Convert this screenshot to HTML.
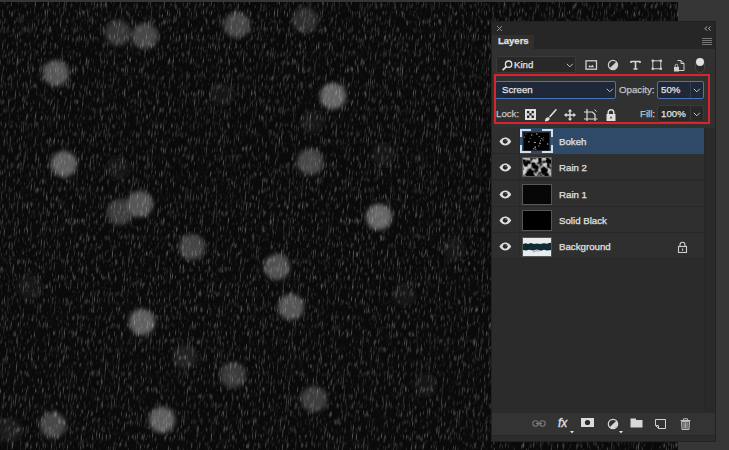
<!DOCTYPE html>
<html><head><meta charset="utf-8">
<style>
*{box-sizing:border-box;margin:0;padding:0}
html,body{width:729px;height:450px;overflow:hidden;background:#363636;font-family:"Liberation Sans",sans-serif;}
.a{position:absolute}
#canvas{position:absolute;left:0;top:2px;width:678px;height:448px;background:#080808;overflow:hidden}
#panel{position:absolute;left:491px;top:21px;width:225px;height:421px;background:#313131;border:1px solid #222}
.t{position:absolute;color:#e2e2e2;font-size:9.7px;white-space:nowrap;line-height:10px;-webkit-text-stroke:0.25px currentColor}
.row{position:absolute;left:0;width:212px;height:26px;border-bottom:1px solid #272727;background:#2f2f2f}
.eye{position:absolute;left:7px;top:9px}
</style></head><body>
<div id="canvas">
<svg width="678" height="448" style="position:absolute;left:0;top:0">
<defs>
<filter id="rain" x="-20" y="0" width="760" height="448" filterUnits="userSpaceOnUse">
<feTurbulence type="fractalNoise" baseFrequency="0.93 0.125" numOctaves="2" seed="3" result="n"/>
<feColorMatrix in="n" type="matrix" values="0 0 0 0 1  0 0 0 0 1  0 0 0 0 1  3.5 0 0 0 -1.9" result="m"/>
<feGaussianBlur in="m" stdDeviation="0.75"/>
</filter>
<filter id="blur" x="-10%" y="-10%" width="120%" height="120%"><feGaussianBlur stdDeviation="2"/></filter>
</defs>
<rect width="678" height="448" fill="#0a0a0a"/>
<g filter="url(#blur)" transform="translate(0,-2)">
<circle cx="118" cy="33" r="13" fill="#393939"/>
<circle cx="145" cy="36" r="13" fill="#464646"/>
<circle cx="56" cy="73" r="13" fill="#565656"/>
<circle cx="237" cy="25" r="13" fill="#464646"/>
<circle cx="64" cy="164" r="13" fill="#616161"/>
<circle cx="118" cy="168" r="12" fill="#161616"/>
<circle cx="120" cy="212" r="13" fill="#3c3c3c"/>
<circle cx="140" cy="204" r="13" fill="#565656"/>
<circle cx="305" cy="20" r="13" fill="#2e2e2e"/>
<circle cx="333" cy="96" r="13" fill="#666666"/>
<circle cx="312" cy="122" r="12" fill="#161616"/>
<circle cx="310" cy="162" r="13" fill="#464646"/>
<circle cx="379" cy="217" r="13" fill="#666666"/>
<circle cx="192" cy="247" r="13" fill="#444444"/>
<circle cx="30" cy="287" r="13" fill="#151515"/>
<circle cx="142" cy="322" r="13" fill="#616161"/>
<circle cx="185" cy="357" r="12" fill="#242424"/>
<circle cx="233" cy="375" r="13" fill="#3b3b3b"/>
<circle cx="162" cy="420" r="13" fill="#616161"/>
<circle cx="53" cy="425" r="13" fill="#464646"/>
<circle cx="10" cy="430" r="12" fill="#1e1e1e"/>
<circle cx="277" cy="267" r="13" fill="#515151"/>
<circle cx="291" cy="307" r="13" fill="#565656"/>
<circle cx="314" cy="399" r="13" fill="#3e3e3e"/>
<circle cx="454" cy="249" r="12" fill="#181818"/>
<circle cx="404" cy="295" r="12" fill="#141414"/>
<circle cx="425" cy="385" r="12" fill="#161616"/>
<circle cx="222" cy="94" r="12" fill="#171717"/>
<circle cx="383" cy="155" r="12" fill="#171717"/>
</g>

<g transform="skewX(-5)"><rect x="-10" y="0" width="760" height="448" filter="url(#rain)" opacity="0.32"/></g>

</svg>
</div>
<div id="panel">
  <div class="a" style="left:0;top:0;width:223px;height:27px;background:#262626"></div>
  <div class="a" style="left:0;top:13px;width:42px;height:14px;background:#303030"></div>
  <div class="t" style="left:6px;top:14px;font-weight:bold;font-size:9.5px">Layers</div>
  <svg class="a" style="left:3.5px;top:3px" width="8" height="8"><path d="M1 1L6 6M6 1L1 6" stroke="#9a9a9a" stroke-width="0.9"/></svg>
  <svg class="a" style="left:211.5px;top:4px" width="8" height="5"><path d="M3 0.5L1 2.5L3 4.5M6.5 0.5L4.5 2.5L6.5 4.5" stroke="#b0b0b0" stroke-width="1" fill="none"/></svg>
  <svg class="a" style="left:210px;top:16px" width="10" height="8"><path d="M0 0.5H10M0 2.5H10M0 4.5H10M0 6.5H10" stroke="#8a8a8a" stroke-width="0.8"/></svg>
  <div class="a" style="left:4px;top:34px;width:80px;height:17px;background:#282828;border:1px solid #3a3a3a;border-radius:2px"></div>
  <svg class="a" style="left:10px;top:37.5px" width="11" height="11"><circle cx="6.6" cy="4.2" r="3.2" stroke="#e0e0e0" stroke-width="1.3" fill="none"/><path d="M4.3 6.6L1.2 9.7" stroke="#e0e0e0" stroke-width="1.7" stroke-linecap="round"/></svg>
  <div class="t" style="left:22px;top:38px">Kind</div>
  <svg class="a" style="left:74px;top:41px" width="8" height="5"><path d="M0.8 0.8L3.8 3.8L6.8 0.8" stroke="#c4c4c4" stroke-width="1" fill="none"/></svg>
  <svg class="a" style="left:93px;top:38px" width="13" height="10"><rect x="1" y="0.8" width="10.5" height="8.4" stroke="#d0d0d0" stroke-width="1.3" fill="none"/><path d="M3.2 7.2L4.7 5L5.9 6.6L7.3 4.8L9.2 7.2Z" fill="#d0d0d0"/></svg>
  <svg class="a" style="left:115px;top:37px" width="12" height="12"><circle cx="6" cy="6" r="4.6" stroke="#d0d0d0" stroke-width="1.2" fill="none"/><path d="M9.3 2.7A4.6 4.6 0 0 1 2.7 9.3Z" fill="#d0d0d0"/></svg>
  <svg class="a" style="left:138px;top:38px" width="11" height="10"><path d="M1 1.5H10M5.5 1.5V9M3.5 9H7.5M1 1V3M10 1V3" stroke="#d6d6d6" stroke-width="1.6" fill="none"/></svg>
  <svg class="a" style="left:159px;top:37px" width="12" height="12"><rect x="1.8" y="1.8" width="8" height="8" stroke="#d0d0d0" stroke-width="1" fill="none"/><circle cx="1.8" cy="1.8" r="1.3" fill="#d0d0d0"/><circle cx="9.8" cy="1.8" r="1.3" fill="#d0d0d0"/><circle cx="1.8" cy="9.8" r="1.3" fill="#d0d0d0"/><circle cx="9.8" cy="9.8" r="1.3" fill="#d0d0d0"/></svg>
  <svg class="a" style="left:181px;top:38px" width="12" height="12"><path d="M4.5 0.5H8L11 3.5V10.5H6" stroke="#d0d0d0" stroke-width="1" fill="none"/><path d="M8 0.5V3.5H11" stroke="#d0d0d0" stroke-width="1" fill="none"/><rect x="1" y="7" width="5" height="4.5" fill="#d0d0d0"/><path d="M2.2 7V5.6A1.3 1.3 0 0 1 4.8 5.6V7" stroke="#d0d0d0" stroke-width="0.9" fill="none"/></svg>
  <div class="a" style="left:203px;top:36px;width:10px;height:15px;border-radius:5px;background:#2a2a2a;border:1px solid #444"></div>
  <div class="a" style="left:204px;top:36px;width:8px;height:8px;border-radius:4px;background:#e0e0e0"></div>
  <div class="a" style="left:3px;top:59px;width:121px;height:18px;background:#1f2838;border:1px solid #4a73b8;border-radius:2px"></div>
  <div class="t" style="left:10px;top:63px">Screen</div>
  <svg class="a" style="left:114px;top:66px" width="8" height="5"><path d="M0.8 0.8L3.8 3.8L6.8 0.8" stroke="#c4c4c4" stroke-width="1" fill="none"/></svg>
  <div class="t" style="left:127px;top:63px;color:#c4c4c4">Opacity:</div>
  <div class="a" style="left:165px;top:59px;width:47px;height:18px;background:#1f2838;border:1px solid #4a73b8;border-radius:2px"></div>
  <div class="a" style="left:198px;top:60px;width:1px;height:16px;background:#333c4a"></div>
  <div class="t" style="left:169px;top:63px">50%</div>
  <svg class="a" style="left:201px;top:66px" width="8" height="5"><path d="M0.8 0.8L3.8 3.8L6.8 0.8" stroke="#c4c4c4" stroke-width="1" fill="none"/></svg>
  <div class="t" style="left:4px;top:87px;color:#c4c4c4">Lock:</div>
  <svg class="a" style="left:32.5px;top:87px" width="11" height="11"><rect x="0" y="0" width="11" height="11" fill="#dedede"/><path d="M2 2h2.3v2.3h-2.3zM6.6 2h2.3v2.3h-2.3zM4.3 4.3h2.3v2.3h-2.3zM2 6.6h2.3v2.3h-2.3zM6.6 6.6h2.3v2.3h-2.3z" fill="#222"/></svg>
  <svg class="a" style="left:52px;top:86.5px" width="13" height="13"><path d="M12 0.8L6 7.5" stroke="#dedede" stroke-width="1.6" stroke-linecap="round"/><path d="M0.8 12.2C1 10 2.2 8 4.8 8.2L5.8 9.4C5 12 2.8 12.4 0.8 12.2Z" fill="#dedede"/></svg>
  <svg class="a" style="left:72px;top:86.5px" width="12" height="12"><path d="M6 1.5V10.5M1.5 6H10.5" stroke="#dedede" stroke-width="1.4"/><path d="M6 0L3.8 2.6H8.2ZM6 12L3.8 9.4H8.2ZM0 6L2.6 3.8V8.2ZM12 6L9.4 3.8V8.2Z" fill="#dedede"/></svg>
  <svg class="a" style="left:92px;top:86.5px" width="14" height="12"><path d="M3 0V12M0 10H13.5M0 3H8.5L11 5.5V12" stroke="#dedede" stroke-width="1.2" fill="none"/><path d="M10.5 0.5L12.5 2.5" stroke="#dedede" stroke-width="1"/></svg>
  <svg class="a" style="left:113.5px;top:86.5px" width="10" height="12"><rect x="0.5" y="5" width="9" height="7" fill="#dedede"/><path d="M2.2 5V3.6A2.8 2.8 0 0 1 7.8 3.6V5" stroke="#dedede" stroke-width="1.4" fill="none"/><rect x="4.4" y="7.6" width="1.3" height="2" fill="#333"/></svg>
  <div class="t" style="left:148px;top:87px;color:#c4c4c4">Fill:</div>
  <div class="a" style="left:165px;top:83px;width:47px;height:17px;background:#282828;border:1px solid #3a3a3a;border-radius:2px"></div>
  <div class="a" style="left:198px;top:84px;width:1px;height:15px;background:#3a3a3a"></div>
  <div class="t" style="left:169px;top:87px">100%</div>
  <svg class="a" style="left:201px;top:90px" width="8" height="5"><path d="M0.8 0.8L3.8 3.8L6.8 0.8" stroke="#c4c4c4" stroke-width="1" fill="none"/></svg>
  <div class="a" style="left:2px;top:51.5px;width:216px;height:50px;border:2px solid #d8242c"></div>
  <div class="a" style="left:0;top:106px;width:212px;height:284px;background:#2b2b2b"></div>
  <div class="a" style="left:212px;top:106px;width:11px;height:284px;background:#2a2a2a;border-left:1px solid #272727"></div>
  <div class="row" style="top:106.0px"><div class="a" style="left:28px;top:0;width:184px;height:26px;background:#2f4a68"></div><div class="a" style="left:27px;top:0;width:1px;height:26px;background:#2a2a2a"></div><svg class="eye" width="13" height="9" viewBox="0 0 13 9"><path d="M0.4 4.4C2.4 1.3 4.4 0.4 6.3 0.4S10.2 1.3 12.2 4.4C10.2 7.5 8.2 8.4 6.3 8.4S2.4 7.5 0.4 4.4Z" fill="#dedede"/><circle cx="6.2" cy="4.3" r="2.4" fill="#262626"/><circle cx="7" cy="3.6" r="0.7" fill="#8a8a8a"/></svg><div class="a" style="left:28px;top:1px;width:33px;height:24px;border:1px solid #5a7590"></div>
<div class="a" style="left:28px;top:1px;width:33px;height:24px;border:2px solid #d4dee8"></div>
<div class="a" style="left:39px;top:0px;width:11px;height:3px;background:#2f4a68;"></div>
<div class="a" style="left:39px;top:23px;width:11px;height:3px;background:#2f4a68;"></div>
<div class="a" style="left:28px;top:9px;width:2px;height:8px;background:#3d5670;"></div>
<div class="a" style="left:59px;top:9px;width:2px;height:8px;background:#3d5670;"></div>
<svg class="a" style="left:31px;top:3.5px" width="27" height="19"><rect width="27" height="19" fill="#000" stroke="#444" stroke-width="1"/>
<g fill="#b0b0b0"><circle cx="12.4" cy="10.5" r="0.6"/><circle cx="12.3" cy="15.2" r="0.5"/><circle cx="5.9" cy="9.7" r="0.7"/><circle cx="16.2" cy="4.5" r="0.6"/><circle cx="8.8" cy="3.0" r="0.7"/><circle cx="16.7" cy="11.0" r="0.6"/><circle cx="24.7" cy="12.0" r="0.7"/><circle cx="17.1" cy="11.5" r="0.7"/><circle cx="3.0" cy="2.1" r="0.5"/><circle cx="15.9" cy="13.9" r="0.6"/><circle cx="12.1" cy="15.0" r="0.7"/><circle cx="7.1" cy="6.2" r="0.5"/><circle cx="17.4" cy="8.8" r="0.6"/><circle cx="11.3" cy="10.3" r="0.5"/><circle cx="18.5" cy="6.5" r="0.5"/><circle cx="13.8" cy="2.0" r="0.7"/><circle cx="19.9" cy="7.9" r="0.6"/><circle cx="10.8" cy="16.8" r="0.7"/><circle cx="1.5" cy="4.9" r="0.5"/><circle cx="12.8" cy="17.2" r="0.6"/><circle cx="11.6" cy="10.6" r="0.5"/><circle cx="20.2" cy="5.8" r="0.5"/></g></svg><div class="t" style="left:67px;top:9px">Bokeh</div></div>
  <div class="row" style="top:132.25px"><div class="a" style="left:27px;top:0;width:1px;height:26px;background:#2a2a2a"></div><svg class="eye" width="13" height="9" viewBox="0 0 13 9"><path d="M0.4 4.4C2.4 1.3 4.4 0.4 6.3 0.4S10.2 1.3 12.2 4.4C10.2 7.5 8.2 8.4 6.3 8.4S2.4 7.5 0.4 4.4Z" fill="#dedede"/><circle cx="6.2" cy="4.3" r="2.4" fill="#262626"/><circle cx="7" cy="3.6" r="0.7" fill="#8a8a8a"/></svg><div class="a" style="left:30px;top:3px;width:30px;height:20px;border:1px solid #5a5a5a;overflow:hidden">
<svg width="28" height="18" style="display:block"><defs><filter id="blot" x="0" y="0" width="100%" height="100%" color-interpolation-filters="sRGB"><feTurbulence type="fractalNoise" baseFrequency="0.16" numOctaves="2" seed="7"/><feColorMatrix type="matrix" values="1.2 0 0 0 -0.05  1.2 0 0 0 -0.05  1.2 0 0 0 -0.05  6 0 0 0 -2.6"/></filter></defs><rect width="28" height="18" fill="#050505"/><rect width="28" height="18" filter="url(#blot)"/></svg></div><div class="t" style="left:67px;top:9px">Rain 2</div></div>
  <div class="row" style="top:158.5px"><div class="a" style="left:27px;top:0;width:1px;height:26px;background:#2a2a2a"></div><svg class="eye" width="13" height="9" viewBox="0 0 13 9"><path d="M0.4 4.4C2.4 1.3 4.4 0.4 6.3 0.4S10.2 1.3 12.2 4.4C10.2 7.5 8.2 8.4 6.3 8.4S2.4 7.5 0.4 4.4Z" fill="#dedede"/><circle cx="6.2" cy="4.3" r="2.4" fill="#262626"/><circle cx="7" cy="3.6" r="0.7" fill="#8a8a8a"/></svg><div class="a" style="left:30px;top:3px;width:30px;height:21px;border:1px solid #585858;background:#070707"></div><div class="t" style="left:67px;top:9px">Rain 1</div></div>
  <div class="row" style="top:184.75px"><div class="a" style="left:27px;top:0;width:1px;height:26px;background:#2a2a2a"></div><svg class="eye" width="13" height="9" viewBox="0 0 13 9"><path d="M0.4 4.4C2.4 1.3 4.4 0.4 6.3 0.4S10.2 1.3 12.2 4.4C10.2 7.5 8.2 8.4 6.3 8.4S2.4 7.5 0.4 4.4Z" fill="#dedede"/><circle cx="6.2" cy="4.3" r="2.4" fill="#262626"/><circle cx="7" cy="3.6" r="0.7" fill="#8a8a8a"/></svg><div class="a" style="left:30px;top:3px;width:30px;height:21px;border:1px solid #555;background:#000"></div><div class="t" style="left:67px;top:9px">Solid Black</div></div>
  <div class="row" style="top:211.0px"><div class="a" style="left:27px;top:0;width:1px;height:26px;background:#2a2a2a"></div><svg class="eye" width="13" height="9" viewBox="0 0 13 9"><path d="M0.4 4.4C2.4 1.3 4.4 0.4 6.3 0.4S10.2 1.3 12.2 4.4C10.2 7.5 8.2 8.4 6.3 8.4S2.4 7.5 0.4 4.4Z" fill="#dedede"/><circle cx="6.2" cy="4.3" r="2.4" fill="#262626"/><circle cx="7" cy="3.6" r="0.7" fill="#8a8a8a"/></svg><div class="a" style="left:30px;top:4px;width:30px;height:20px;border:1px solid #555;background:#e6ecee;overflow:hidden">
<svg width="28" height="18" style="display:block"><rect width="28" height="18" fill="#e6ecef"/><path d="M0 6L3 5.2L5 6L8 5L11 6L14 5.5L17 6L21 5.3L24 5.8L27 4.8L28 5V12L24 12.5L21 11.8L18 12.8L14 11.6L10 12.4L6 11.8L3 12.5L0 12Z" fill="#0e2a33"/><path d="M10 14L14 12.5L16 13.5" stroke="#5a6a70" stroke-width="0.6" fill="none"/></svg></div><div class="t" style="left:67px;top:9px">Background</div><svg class="a" style="left:185px;top:8px" width="11" height="12"><rect x="1.5" y="5.5" width="8" height="6" stroke="#cfcfcf" stroke-width="1.1" fill="none"/><path d="M3 5.5V3.8A2.5 2.5 0 0 1 8 3.8V5.5" stroke="#cfcfcf" stroke-width="1.1" fill="none"/><rect x="5" y="7.5" width="1.1" height="2.2" fill="#cfcfcf"/></svg></div>

  <div class="a" style="left:0;top:390px;width:223px;height:23px;background:#333;border-top:1px solid #2a2a2a"></div>
  <div class="a" style="left:0;top:413px;width:223px;height:6px;background:#2c2c2c;border-top:1px solid #262626"></div>
  <svg class="a" style="left:40px;top:398px" width="14" height="7"><circle cx="3.5" cy="3.5" r="2.7" stroke="#7a7a7a" stroke-width="1.1" fill="none"/><circle cx="10.5" cy="3.5" r="2.7" stroke="#7a7a7a" stroke-width="1.1" fill="none"/><path d="M4 3.5H10" stroke="#7a7a7a" stroke-width="1.1"/></svg>
  <div class="t" style="left:66px;top:395px;font-style:italic;font-size:12px;line-height:12px;color:#e0e0e0;-webkit-text-stroke:0.3px #e0e0e0">fx</div>
  <svg class="a" style="left:78px;top:408.5px" width="4" height="3"><path d="M0 0H4L2 2.5Z" fill="#ddd"/></svg>
  <svg class="a" style="left:89px;top:396px" width="13" height="9"><rect width="13" height="9" fill="#dcdcdc"/><circle cx="6.5" cy="4.5" r="2.6" fill="#2a2a2a"/></svg>
  <svg class="a" style="left:114.5px;top:395.5px" width="12" height="12"><circle cx="6" cy="6" r="4.7" stroke="#d8d8d8" stroke-width="1.2" fill="none"/><path d="M9.3 2.7A4.7 4.7 0 0 1 2.7 9.3Z" fill="#d8d8d8"/></svg>
  <svg class="a" style="left:127px;top:408.5px" width="4" height="3"><path d="M0 0H4L2 2.5Z" fill="#ddd"/></svg>
  <svg class="a" style="left:138px;top:396px" width="13" height="10"><path d="M0.5 0.5H6V2H12.5V9.5H0.5Z" fill="#d8d8d8"/></svg>
  <svg class="a" style="left:163px;top:397px" width="11" height="10"><path d="M0.5 0.5H10.5V9.5H3.5L0.5 6.5Z" stroke="#d0d0d0" stroke-width="1" fill="none"/><path d="M0.5 6.5H3.5V9.5" stroke="#d0d0d0" stroke-width="1" fill="none"/></svg>
  <svg class="a" style="left:188px;top:396px" width="11" height="12"><path d="M0.5 2.5H10.5M3.5 2.5V0.8H7.5V2.5" stroke="#bdbdbd" stroke-width="1" fill="none"/><path d="M1.5 3.5H9.5L9 11.5H2Z" stroke="#bdbdbd" stroke-width="1" fill="#555"/><path d="M4 4.5V10.5M5.5 4.5V10.5M7 4.5V10.5" stroke="#bdbdbd" stroke-width="0.8"/></svg>
</div>
</body></html>
